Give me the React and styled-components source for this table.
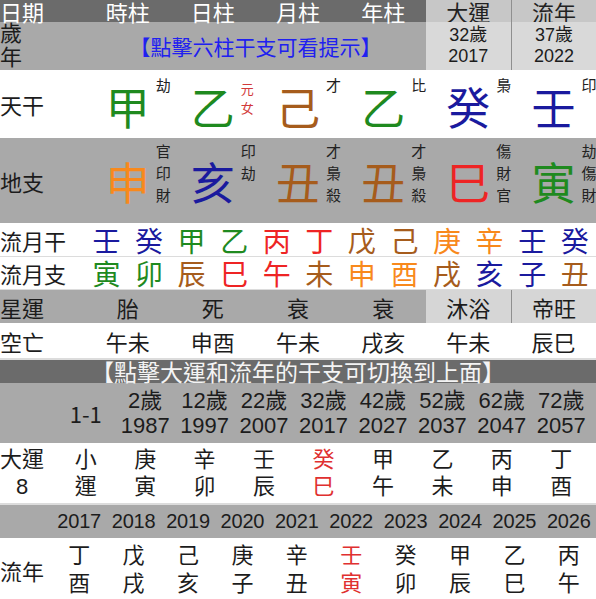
import React from 'react';
import styled, { createGlobalStyle } from 'styled-components';

const GlobalStyle = createGlobalStyle`
  body {
    margin: 0;
    background: #fff;
    font-family: "Liberation Sans", "Noto Sans CJK TC", sans-serif;
    color: #1c1c1c;
  }
`;

const WOOD = '#1f8a1f';
const FIRE = '#ee2424';
const EARTH = '#a65c1c';
const METAL = '#f8891c';
const WATER = '#1a1a9e';

const colorOf = {
  甲: WOOD, 乙: WOOD, 丙: FIRE, 丁: FIRE, 戊: EARTH, 己: EARTH,
  庚: METAL, 辛: METAL, 壬: WATER, 癸: WATER,
  寅: WOOD, 卯: WOOD, 巳: FIRE, 午: FIRE, 辰: EARTH, 未: EARTH,
  戌: EARTH, 丑: EARTH, 申: METAL, 酉: METAL, 亥: WATER, 子: WATER,
};

const stems = [
  { ch: '甲', notes: ['劫'] },
  { ch: '乙', notes: ['元', '女'], small: true },
  { ch: '己', notes: ['才'] },
  { ch: '乙', notes: ['比'] },
  { ch: '癸', notes: ['梟'] },
  { ch: '壬', notes: ['印'] },
];

const branches = [
  { ch: '申', notes: ['官', '印', '財'] },
  { ch: '亥', notes: ['印', '劫'] },
  { ch: '丑', notes: ['才', '梟', '殺'] },
  { ch: '丑', notes: ['才', '梟', '殺'] },
  { ch: '巳', notes: ['傷', '財', '官'] },
  { ch: '寅', notes: ['劫', '傷', '財'] },
];

const monthStems = '壬癸甲乙丙丁戊己庚辛壬癸'.split('');
const monthBranches = '寅卯辰巳午未申酉戌亥子丑'.split('');

const stars = ['胎', '死', '衰', '衰'];
const voids = ['午未', '申酉', '午未', '戌亥', '午未', '辰巳'];

const bigLuck = [
  { age: '2歲', year: '1987', gz: '庚寅' },
  { age: '12歲', year: '1997', gz: '辛卯' },
  { age: '22歲', year: '2007', gz: '壬辰' },
  { age: '32歲', year: '2017', gz: '癸巳', current: true },
  { age: '42歲', year: '2027', gz: '甲午' },
  { age: '52歲', year: '2037', gz: '乙未' },
  { age: '62歲', year: '2047', gz: '丙申' },
  { age: '72歲', year: '2057', gz: '丁酉' },
];

const years = [
  ['2017', '丁酉'], ['2018', '戊戌'], ['2019', '己亥'], ['2020', '庚子'], ['2021', '辛丑'],
  ['2022', '壬寅', true], ['2023', '癸卯'], ['2024', '甲辰'], ['2025', '乙巳'], ['2026', '丙午'],
];

export default function App() {
  return (
    <Page>
      <GlobalStyle />

      <Band $cols="repeat(7, 1fr)" $h={22} $bg="#6b6b6b">
        <Head $left>日期</Head>
        <Head>時柱</Head>
        <Head>日柱</Head>
        <Head>月柱</Head>
        <Head>年柱</Head>
        <Head $light>大運</Head>
        <Head $light $divider>流年</Head>
      </Band>

      <Band $cols="repeat(7, 1fr)" $h={48} $bg="#a9a9a9">
        <Cell $left>
          <Stack $size={22} $lh={24}>
            <span>歲</span>
            <span>年</span>
          </Stack>
        </Cell>
        <Prompt>【點擊六柱干支可看提示】</Prompt>
        <Cell $bg="#d9d9d9">
          <Stack $size={18} $lh={21} $center>
            <span>32歲</span>
            <span>2017</span>
          </Stack>
        </Cell>
        <Cell $bg="#d9d9d9" $divider>
          <Stack $size={18} $lh={21} $center>
            <span>37歲</span>
            <span>2022</span>
          </Stack>
        </Cell>
      </Band>

      <Band $cols="repeat(7, 1fr)" $h={68} $bg="#fff">
        <Label>天干</Label>
        {stems.map((s, i) => (
          <Cell key={i} $pt={4}>
            <Big $c={colorOf[s.ch]}>
              {s.ch}
              <Notes $top={s.small ? -5 : -10} $size={s.small ? 13 : 15} $lh={s.small ? 19 : 22} $red={s.small}>
                {s.notes.map((n, j) => <span key={j}>{n}</span>)}
              </Notes>
            </Big>
          </Cell>
        ))}
      </Band>

      <Band $cols="repeat(7, 1fr)" $h={85} $bg="#a9a9a9">
        <Label>地支</Label>
        {branches.map((b, i) => (
          <Cell key={i}>
            <Big $c={colorOf[b.ch]}>
              {b.ch}
              <Notes $top={-19} $size={15} $lh={22}>
                {b.notes.map((n, j) => <span key={j}>{n}</span>)}
              </Notes>
            </Big>
          </Cell>
        ))}
      </Band>

      <Band $cols="2fr repeat(12, 1fr)" $h={34} $bg="#fff" $line={1}>
        <Label>流月干</Label>
        {monthStems.map((c, i) => (
          <Cell key={i}><Month $c={colorOf[c]}>{c}</Month></Cell>
        ))}
      </Band>

      <Band $cols="2fr repeat(12, 1fr)" $h={33} $bg="#fff" $line={1}>
        <Label>流月支</Label>
        {monthBranches.map((c, i) => (
          <Cell key={i}><Month $c={colorOf[c]}>{c}</Month></Cell>
        ))}
      </Band>

      <Band $cols="repeat(7, 1fr)" $h={33} $bg="#a9a9a9">
        <Label>星運</Label>
        {stars.map((s, i) => <Text key={i}>{s}</Text>)}
        <Text $bg="#d6d6d6">沐浴</Text>
        <Text $bg="#d6d6d6" $divider>帝旺</Text>
      </Band>

      <Band $cols="repeat(7, 1fr)" $h={37} $bg="#fff" $line={2}>
        <Label>空亡</Label>
        {voids.map((v, i) => <Text key={i}>{v}</Text>)}
      </Band>

      <DarkBar>【點擊大運和流年的干支可切換到上面】</DarkBar>

      <Band $cols="56px repeat(9, 1fr)" $h={60} $bg="#a9a9a9" $pr={5}>
        <Cell />
        <Text>1-1</Text>
        {bigLuck.map((l, i) => (
          <Cell key={i}>
            <Stack $size={22} $lh={25} $center>
              <span>{l.age}</span>
              <span>{l.year}</span>
            </Stack>
          </Cell>
        ))}
      </Band>

      <Band $cols="56px repeat(9, 1fr)" $h={62} $bg="#fff" $pr={5} $line={2}>
        <Cell $left>
          <Stack $size={22} $lh={27} $center>
            <span>大運</span>
            <span>8</span>
          </Stack>
        </Cell>
        <Cell>
          <Stack $size={22} $lh={27} $center>
            <span>小</span>
            <span>運</span>
          </Stack>
        </Cell>
        {bigLuck.map((l, i) => (
          <Cell key={i}>
            <Stack $size={22} $lh={27} $center $red={l.current}>
              <span>{l.gz[0]}</span>
              <span>{l.gz[1]}</span>
            </Stack>
          </Cell>
        ))}
      </Band>

      <Band $cols="52px repeat(10, 1fr)" $h={33} $bg="#a9a9a9">
        <Cell />
        {years.map(([y], i) => <Year key={i}>{y}</Year>)}
      </Band>

      <Band $cols="52px repeat(10, 1fr)" $h={61} $bg="#fff">
        <Label $pt={3}>流年</Label>
        {years.map(([, gz, cur], i) => (
          <Cell key={i} $pt={3}>
            <Stack $size={22} $lh={28} $center $red={cur}>
              <span>{gz[0]}</span>
              <span>{gz[1]}</span>
            </Stack>
          </Cell>
        ))}
      </Band>
    </Page>
  );
}

const Page = styled.div`
  width: 596px;
  overflow: hidden;
`;

const Band = styled.div`
  display: grid;
  grid-template-columns: ${(p) => p.$cols};
  box-sizing: border-box;
  height: ${(p) => p.$h}px;
  background: ${(p) => p.$bg};
  padding-right: ${(p) => p.$pr || 0}px;
  border-bottom: ${(p) => (p.$line ? `${p.$line}px solid #dcdcdc` : 'none')};
`;

const Cell = styled.div`
  display: flex;
  align-items: center;
  justify-content: ${(p) => (p.$left ? 'flex-start' : 'center')};
  background: ${(p) => p.$bg || 'transparent'};
  border-left: ${(p) => (p.$divider ? '1px solid #8f8f8f' : 'none')};
  padding-top: ${(p) => p.$pt || 0}px;
  min-width: 0;
`;

const Head = styled(Cell)`
  font-family: "Noto Sans CJK TC", sans-serif;
  font-size: 22px;
  line-height: 22px;
  color: ${(p) => (p.$light ? '#222' : '#fff')};
  background: ${(p) => (p.$light ? '#c7c7c7' : 'transparent')};
`;

const Label = styled(Cell)`
  justify-content: flex-start;
  font-family: "Noto Sans CJK TC", sans-serif;
  font-size: 22px;
  white-space: nowrap;
  overflow: visible;
`;

const Text = styled(Cell)`
  font-family: "Noto Sans CJK TC", "Liberation Sans", sans-serif;
  font-size: 22px;
`;

const Year = styled(Cell)`
  font-size: 20px;
  letter-spacing: -0.2px;
`;

const Stack = styled.div`
  display: flex;
  flex-direction: column;
  align-items: ${(p) => (p.$center ? 'center' : 'flex-start')};
  font-size: ${(p) => p.$size}px;
  line-height: ${(p) => p.$lh}px;
  color: ${(p) => (p.$red ? '#e03030' : 'inherit')};
  white-space: nowrap;
`;

const Prompt = styled(Cell)`
  grid-column: span 4;
  font-family: "Noto Sans CJK TC", sans-serif;
  font-size: 21px;
  color: #2020f0;
`;

const Big = styled.span`
  position: relative;
  font-family: "Noto Sans CJK TC", sans-serif;
  font-size: 44px;
  line-height: 44px;
  color: ${(p) => p.$c};
`;

const Notes = styled.span`
  position: absolute;
  left: calc(100% + 6px);
  top: ${(p) => p.$top}px;
  display: flex;
  flex-direction: column;
  font-size: ${(p) => p.$size}px;
  line-height: ${(p) => p.$lh}px;
  color: ${(p) => (p.$red ? '#d23a3a' : '#222')};
`;

const Month = styled.span`
  font-family: "Noto Sans CJK TC", sans-serif;
  font-size: 28px;
  line-height: 30px;
  color: ${(p) => p.$c};
`;

const DarkBar = styled.div`
  height: 23px;
  background: #6b6b6b;
  color: #f4f4f4;
  display: flex;
  align-items: center;
  justify-content: center;
  font-family: "Noto Sans CJK TC", sans-serif;
  font-size: 23px;
  line-height: 23px;
  white-space: nowrap;
`;
